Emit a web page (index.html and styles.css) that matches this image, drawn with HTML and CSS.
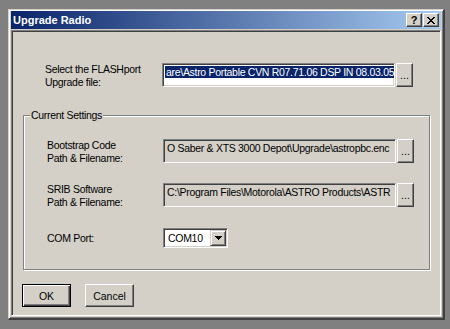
FILE: index.html
```html
<!DOCTYPE html>
<html>
<head>
<meta charset="utf-8">
<link rel="stylesheet" href="styles.css">
</head>
<body>
<div class="window">
  <div class="titlebar">
    <span class="title">Upgrade Radio</span>
    <div class="tbtns">
      <div class="tbtn help">?</div>
      <div class="tbtn close">
        <svg width="8" height="7" viewBox="0 0 8 7" shape-rendering="crispEdges">
          <path fill="#000" d="M0 0h2v1H0zM6 0h2v1H6zM1 1h2v1H1zM5 1h2v1H5zM2 2h4v1H2zM3 3h2v1H3zM2 4h4v1H2zM1 5h2v1H1zM5 5h2v1H5zM0 6h2v1H0zM6 6h2v1H6z"/>
        </svg>
      </div>
    </div>
  </div>
  <div class="client">
    <div class="row top-row">
      <div class="label lbl-top">Select the FLASHport<br>Upgrade file:</div>
      <div class="field white"><span class="sel">are\Astro Portable CVN R07.71.06 DSP IN 08.03.05</span></div>
      <div class="btn browse">...</div>
    </div>
    <div class="group">
      <span class="legend">Current Settings</span>
      <div class="row">
        <div class="label">Bootstrap Code<br>Path &amp; Filename:</div>
        <div class="field">O Saber &amp; XTS 3000 Depot\Upgrade\astropbc.enc</div>
        <div class="btn browse">...</div>
      </div>
      <div class="row">
        <div class="label">SRIB Software<br>Path &amp; Filename:</div>
        <div class="field">C:\Program Files\Motorola\ASTRO Products\ASTR</div>
        <div class="btn browse">...</div>
      </div>
      <div class="row combo-row">
        <div class="label">COM Port:</div>
        <div class="combo">
          <span class="combo-text">COM10</span>
          <div class="drop">
            <svg width="7" height="4" viewBox="0 0 7 4" shape-rendering="crispEdges">
              <path fill="#000" d="M0 0h7v1H0zM1 1h5v1H1zM2 2h3v1H2zM3 3h1v1H3z"/>
            </svg>
          </div>
        </div>
      </div>
    </div>
    <div class="actions">
      <div class="btn push default">OK</div>
      <div class="btn push">Cancel</div>
    </div>
  </div>
</div>
</body>
</html>
```

FILE: styles.css
```css
* { box-sizing: border-box; }

body {
  margin: 0;
  background: #808080;
  font-family: "Liberation Sans", Arial, sans-serif;
  font-size: 10.5px;
  letter-spacing: -0.3px;
  color: #000;
}

.window {
  margin: 9px 0 0 8px;
  width: 437px;
  height: 311px;
  background: #d4d0c8;
  border-style: solid;
  border-width: 1px 2px 2px 1px;
  border-color: #d4d0c8 #404040 #404040 #d4d0c8;
  box-shadow: inset 1px 1px #fff, inset -1px -1px #808080;
  padding: 1px 2px 2px 2px;
  display: flex;
  flex-direction: column;
}

.titlebar {
  height: 18px;
  flex: none;
  display: flex;
  align-items: center;
  justify-content: space-between;
  background: linear-gradient(to right, #0a246a, #a6caf0);
  padding: 0 2px 0 2px;
}

.title {
  color: #fff;
  font-weight: bold;
  font-size: 11px;
  letter-spacing: 0;
}

.tbtns {
  display: flex;
  gap: 1px;
}

.tbtn {
  width: 16px;
  height: 14px;
  background: #d4d0c8;
  border: 1px solid;
  border-color: #fff #404040 #404040 #fff;
  box-shadow: inset -1px -1px #808080;
  display: flex;
  align-items: center;
  justify-content: center;
}

.help {
  font-weight: bold;
  font-size: 11px;
  letter-spacing: 0;
  line-height: 12px;
  padding-bottom: 1px;
}

.client {
  flex: 1;
  margin-top: 1px;
  border: 1px solid;
  border-color: #808080 #fff #fff #808080;
  box-shadow: inset 1px 1px #404040, inset -1px -1px #d4d0c8;
  padding: 32px 0 0 11px;
  display: flex;
  flex-direction: column;
}

.row {
  display: flex;
  align-items: flex-start;
  height: 24px;
}

.top-row {
  padding-left: 22px;
}

.label {
  width: 116px;
  line-height: 13px;
  padding-top: 0;
  white-space: nowrap;
}

.lbl-top {
  width: 117px;
}

.field {
  width: 233px;
  height: 24px;
  background: #d4d0c8;
  border: 1px solid;
  border-color: #808080 #fff #fff #808080;
  box-shadow: inset 1px 1px #404040, inset -1px -1px #d4d0c8;
  padding: 2px 2px 0 3px;
  line-height: 13px;
  white-space: nowrap;
  overflow: hidden;
}

.field.white {
  background: #fff;
  padding-left: 2px;
}

.sel {
  background: #0a246a;
  color: #fff;
  padding: 0 1px;
}

.btn {
  background: #d4d0c8;
  border: 1px solid;
  border-color: #fff #404040 #404040 #fff;
  box-shadow: inset -1px -1px #808080;
  display: flex;
  align-items: center;
  justify-content: center;
}

.browse {
  width: 17px;
  height: 24px;
  margin-left: 1px;
  line-height: 13px;
  padding-top: 1px;
  letter-spacing: 0;
}

.group {
  position: relative;
  margin-top: 28px;
  width: 407px;
  height: 155px;
  border: 1px solid #808080;
  box-shadow: inset 1px 1px #fff, 1px 1px #fff;
  padding: 23px 0 0 23px;
  display: flex;
  flex-direction: column;
  gap: 20px;
}

.legend {
  position: absolute;
  top: -7px;
  left: 6px;
  padding: 0 1px 0 1px;
  background: #d4d0c8;
  line-height: 13px;
}

.combo-row {
  align-items: center;
  height: 20px;
  margin-top: 1px;
}

.combo {
  width: 65px;
  height: 20px;
  background: #fff;
  border: 1px solid;
  border-color: #808080 #fff #fff #808080;
  box-shadow: inset 1px 1px #404040, inset -1px -1px #d4d0c8;
  padding: 1px 1px 1px 4px;
  display: flex;
  align-items: center;
  justify-content: space-between;
}

.combo-text {
  line-height: 13px;
}

.drop {
  width: 16px;
  height: 16px;
  background: #d4d0c8;
  border: 1px solid;
  border-color: #d4d0c8 #404040 #404040 #d4d0c8;
  box-shadow: inset 1px 1px #fff, inset -1px -1px #808080;
  display: flex;
  align-items: center;
  justify-content: center;
}

.actions {
  display: flex;
  gap: 14px;
  margin-top: 14px;
  margin-left: -1px;
}

.push {
  width: 49px;
  height: 23px;
  letter-spacing: 0;
}

.push.default {
  border: 1px solid #000;
  box-shadow: inset 1px 1px #fff, inset -1px -1px #404040, inset -2px -2px #808080;
}
```
